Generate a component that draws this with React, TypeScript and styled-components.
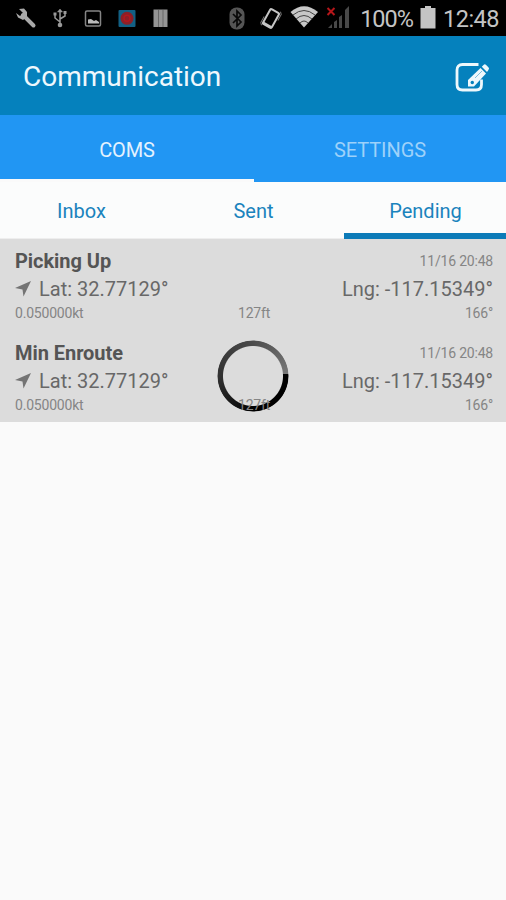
import React from "react";
import styled, { createGlobalStyle } from "styled-components";

const Global = createGlobalStyle`
  * { box-sizing: border-box; }
  body { margin: 0; background: #fafafa; font-family: Roboto, "Liberation Sans", sans-serif; }
`;

const Screen = styled.main`
  width: 506px;
  height: 900px;
  overflow: hidden;
  background: #fafafa;
`;

const StatusBar = styled.div`
  height: 36px;
  background: #000;
  display: flex;
  justify-content: space-between;
  align-items: center;
`;

const StatusIcons = styled.svg`
  display: block;
  flex: none;
`;

const StatusText = styled.span<{ $spacing: number }>`
  color: #c4c4c4;
  font-size: 23.5px;
  line-height: 36px;
  padding-top: 2px;
  letter-spacing: ${(p) => p.$spacing}px;
  white-space: nowrap;
`;

const StatusEnd = styled.div`
  display: flex;
  align-items: center;
  gap: 7px;
  padding-right: 7px;
`;

const AppBar = styled.header`
  height: 79px;
  background: #0581bd;
  display: flex;
  align-items: center;
  justify-content: space-between;
  padding: 2px 16px 0 23px;
`;

const Title = styled.h1`
  margin: 0;
  color: #eef8fd;
  font-size: 28px;
  font-weight: 400;
  line-height: 34px;
`;

const EditButton = styled.button`
  border: 0;
  padding: 0;
  background: none;
  display: flex;
`;

const MainTabs = styled.nav`
  height: 67px;
  display: grid;
  grid-template-columns: 254px 252px;
  background: #2196f3;
`;

const MainTab = styled.div<{ $active?: boolean }>`
  display: flex;
  align-items: center;
  justify-content: center;
  font-size: 20px;
  line-height: 24px;
  letter-spacing: -0.1px;
  padding-top: ${(p) => (p.$active ? 6 : 3)}px;
  color: ${(p) => (p.$active ? "#e4f2fe" : "#9dd1fa")};
  border-bottom: ${(p) => (p.$active ? "3px solid #fafafa" : "0")};
`;

const SubTabs = styled.nav`
  height: 57px;
  display: grid;
  grid-template-columns: 162px 182px 162px;
  background: #fbfcfc;
`;

const SubTab = styled.div<{ $active?: boolean }>`
  display: flex;
  justify-content: center;
  padding-top: 17px;
  padding-left: 1px;
  font-size: 20px;
  line-height: 24px;
  color: #1a83bd;
  border-bottom: ${(p) => (p.$active ? "6px solid #0c7bb8" : "1px solid #eeeeee")};
`;

const List = styled.section`
  position: relative;
  background: #dcdcdc;
  height: 183px;
`;

const Spinner = styled.div`
  position: absolute;
  left: 217px;
  top: 101px;
  width: 72px;
  height: 72px;
  border-radius: 50%;
  background: conic-gradient(from 86deg, #000 0deg, #000 90deg, #303030 180deg, #484848 265deg, #777 360deg);
  mask: radial-gradient(circle, transparent 29.5px, #000 30.5px, #000 35px, transparent 36px);
`;

const Message = styled.article`
  position: relative;
  height: 92px;
  padding: 8px 13px 0 15px;
  color: #686868;
`;

const Line = styled.div`
  height: 28px;
  display: flex;
  align-items: center;
  justify-content: space-between;
`;

const Name = styled.h2`
  margin: 0;
  color: #555;
  font-size: 20px;
  line-height: 28px;
  font-weight: 700;
  letter-spacing: -0.05px;
`;

const Coord = styled.span`
  display: flex;
  align-items: center;
  font-size: 20px;
  line-height: 28px;
`;

const Arrow = styled.svg`
  width: 16px;
  height: 16px;
  margin-right: 8px;
`;

const Details = styled.div`
  display: grid;
  grid-template-columns: 1fr auto 1fr;
  line-height: 20px;
`;

const Small = styled.span<{ $end?: boolean }>`
  font-size: 14px;
  color: #858585;
  text-align: ${(p) => (p.$end ? "right" : "left")};
  letter-spacing: -0.2px;
`;

const messages = [
  { name: "Picking Up", time: "11/16 20:48", lat: "32.77129°", lng: "-117.15349°" },
  { name: "Min Enroute", time: "11/16 20:48", lat: "32.77129°", lng: "-117.15349°" },
];

function NotificationIcons() {
  return (
    <StatusIcons width="355" height="36" viewBox="0 0 355 36" fill="none">
      <path d="m23 15 10.500 10.500" stroke="#a9a9a9" strokeWidth="4" strokeLinecap="round" />
      <path d="M19 9 24 8.500 27 12 27 17 23 20 18 17.500 16 13 20 16 23 13Z" fill="#a9a9a9" />
      <g stroke="#999" strokeWidth="1.500">
        <path d="M60 11V26M60 22 55 18V14M60 19 65 16V12" />
        <path d="m57.500 12 2.500-3 2.500 3Z" fill="#999" strokeWidth=".5" />
        <path d="M53.500 12.500h3v3h-3zM63.500 11h3v3h-3z" fill="#999" stroke="none" />
        <circle cx="60" cy="25" r="2.300" fill="#999" stroke="none" />
      </g>
      <rect x="85.500" y="11" width="15" height="15" rx="1.500" stroke="#858585" strokeWidth="1.500" />
      <path d="M88 23.500v-4l3-.5 3 2 2-1 3 2v1.500Z" fill="#bbb" />
      <rect x="118.500" y="10" width="17" height="17" rx="1" fill="#126084" />
      <circle cx="127" cy="18.300" r="6.500" fill="#8c2027" />
      <circle cx="127" cy="18.300" r="3" stroke="#b3171e" strokeWidth="1.500" />
      <path d="M153.500 9.500h14V27h-14z" fill="#949494" />
      <path d="M158.500 10v17M163 10v17" stroke="#686868" />
      <rect x="229.500" y="7.500" width="15" height="22" rx="7" fill="#555" />
      <path d="m233 14 8 8-4 4V11l4 4-8 8" stroke="#080808" strokeWidth="1.700" />
      <g transform="rotate(29 271 18.500)">
        <rect x="266" y="10" width="10" height="17" rx="1.500" stroke="#c5c5c5" strokeWidth="2" />
        <path d="M266 26h10" stroke="#c5c5c5" strokeWidth="2.500" />
        <path d="M264 20v7l2 2M278 17v-7l-2-2" stroke="#777" />
      </g>
      <path d="M290.500 12Q304 .5 318 12L304 27.500Z" fill="#c7c7c7" />
      <path d="M293 15q11-9 22 0M296 19q8-7 16 0M300 23q4-4 8 0" stroke="#444" strokeWidth="1" />
      <path d="m327.500 8 7 7m0-7-7 7" stroke="#b5161a" strokeWidth="2" />
      <path d="M328 28 332 24v4ZM334 22l3-2v8h-3ZM339 17l3-2v13h-3ZM345 10l4-4v22h-4Z" fill="#484848" />
    </StatusIcons>
  );
}

function EditIcon() {
  return (
    <svg width="36" height="32" viewBox="0 0 36 32" fill="none">
      <path d="M24.500 3.500H8.500Q3 3.500 3 9v14.500q0 5.500 5.500 5.500H22q5.500 0 5.500-5.500v-5" stroke="#eef8fc" strokeWidth="2.800" />
      <path d="M14 25.500v-6.500L26.500 7l5.500 5.500-12 13Z" fill="#eef8fc" />
      <path d="m27.800 5.700 1.700-1.700q1.300-1.300 2.600 0l2.300 2.300q1.300 1.300 0 2.600L33 11Z" fill="#eef8fc" />
      <circle cx="18.300" cy="21.500" r="1.700" fill="#0581bd" />
      <path d="m21 17 7-7" stroke="#82bedc" />
    </svg>
  );
}

export default function App() {
  return (
    <Screen>
      <Global />
      <StatusBar>
        <NotificationIcons />
        <StatusEnd>
          <StatusText $spacing={-1}>100%</StatusText>
          <StatusIcons width="16" height="24" viewBox="0 0 16 24">
            <path d="M5 0h6v2h4.500v20.500H.5V2H5Z" fill="#c4c4c4" />
          </StatusIcons>
          <StatusText $spacing={-0.5}>12:48</StatusText>
        </StatusEnd>
      </StatusBar>
      <AppBar>
        <Title>Communication</Title>
        <EditButton aria-label="Compose"><EditIcon /></EditButton>
      </AppBar>
      <MainTabs>
        <MainTab $active>COMS</MainTab>
        <MainTab>SETTINGS</MainTab>
      </MainTabs>
      <SubTabs>
        <SubTab>Inbox</SubTab>
        <SubTab>Sent</SubTab>
        <SubTab $active>Pending</SubTab>
      </SubTabs>
      <List>
        <Spinner />
        {messages.map((m) => (
          <Message key={m.name}>
            <Line>
              <Name>{m.name}</Name>
              <Small $end>{m.time}</Small>
            </Line>
            <Line>
              <Coord>
                <Arrow viewBox="0 0 16 16"><path d="M0 7 16 0 8.500 15.500 7.500 8.500Z" fill="#747474" /></Arrow>
                Lat: {m.lat}
              </Coord>
              <Coord>Lng: {m.lng}</Coord>
            </Line>
            <Details>
              <Small>0.050000kt</Small>
              <Small>127ft</Small>
              <Small $end>166°</Small>
            </Details>
          </Message>
        ))}
      </List>
    </Screen>
  );
}
